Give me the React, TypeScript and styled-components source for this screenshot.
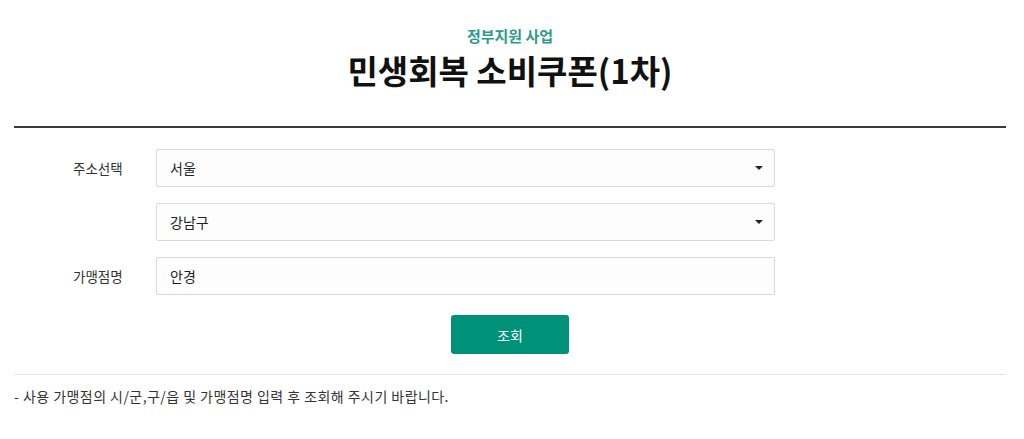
import React from 'react'
import styled, { createGlobalStyle } from 'styled-components'

// ── Styled ─────────────────────────────────────────────────────────

const GlobalStyle = createGlobalStyle`
  html, body { margin: 0; padding: 0; background: #fff; }
  body {
    font-family: "Noto Sans CJK KR", "Noto Sans", sans-serif;
    color: #222;
  }
  * { box-sizing: border-box; }
`

const Page = styled.div`
  width: 992px;
  margin-left: 14px;
  padding-top: 26px;
`

const Header = styled.header`
  display: flex;
  flex-direction: column;
  align-items: center;
  padding-bottom: 34px;
  border-bottom: 2px solid #3a3a3a;
`

const Eyebrow = styled.div`
  font-size: 15px;
  font-weight: 700;
  line-height: 20px;
  color: #2b9c89;
`

const Title = styled.h1`
  margin: 2px 0 0;
  font-size: 33px;
  font-weight: 700;
  line-height: 44px;
  color: #111;
`

const Form = styled.form`
  display: flex;
  flex-direction: column;
  gap: 16px;
  padding: 21px 0 0 59px;
`

const Row = styled.div`
  display: flex;
  align-items: center;
`

const Label = styled.label`
  width: 83px;
  font-size: 13.5px;
  color: #333;
`

const FieldBox = styled.div`
  position: relative;
  width: 619px;
  height: 38px;
  display: flex;
  align-items: center;
  padding: 0 13px;
  border: 1px solid #d9d9d9;
  border-radius: 2px;
  background: #fdfdfd;
  font-size: 14px;
  color: #222;
`

const Caret = styled.span`
  position: absolute;
  right: 11px;
  top: 50%;
  margin-top: -2px;
  width: 0;
  height: 0;
  border-left: 4px solid transparent;
  border-right: 4px solid transparent;
  border-top: 4px solid #222;
`

const Actions = styled.div`
  display: flex;
  justify-content: center;
  padding: 20px 0 20px;
  border-bottom: 1px solid #e6e6e6;
`

const SearchBtn = styled.button`
  width: 118px;
  height: 39px;
  border: none;
  border-radius: 3px;
  background: #00917b;
  color: #fff;
  font-family: inherit;
  font-size: 14px;
  cursor: pointer;
`

const Note = styled.p`
  margin: 11px 0 0;
  font-size: 14px;
  letter-spacing: 0.45px;
  line-height: 20px;
  color: #333;
`

// ── Components ─────────────────────────────────────────────────────

function SelectField({ value }: { value: string }) {
  return (
    <FieldBox>
      {value}
      <Caret />
    </FieldBox>
  )
}

export default function App() {
  return (
    <>
      <GlobalStyle />
      <Page>
        <Header>
          <Eyebrow>정부지원 사업</Eyebrow>
          <Title>민생회복 소비쿠폰(1차)</Title>
        </Header>
        <Form onSubmit={(e) => e.preventDefault()}>
          <Row>
            <Label>주소선택</Label>
            <SelectField value="서울" />
          </Row>
          <Row>
            <Label />
            <SelectField value="강남구" />
          </Row>
          <Row>
            <Label>가맹점명</Label>
            <FieldBox>안경</FieldBox>
          </Row>
        </Form>
        <Actions>
          <SearchBtn type="button">조회</SearchBtn>
        </Actions>
        <Note>- 사용 가맹점의 시/군,구/읍 및 가맹점명 입력 후 조회해 주시기 바랍니다.</Note>
      </Page>
    </>
  )
}
